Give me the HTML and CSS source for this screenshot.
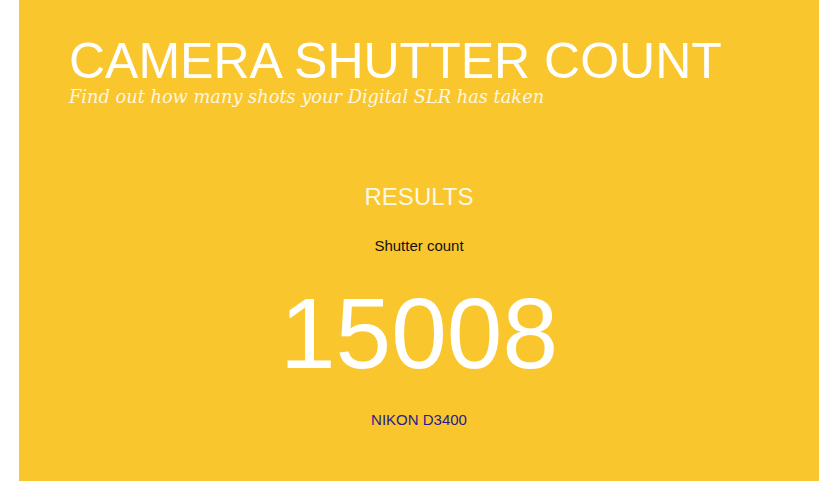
FILE: index.html
```html
<!DOCTYPE html>
<html lang="en">
<head>
<meta charset="utf-8">
<title>Camera Shutter Count</title>
<link rel="stylesheet" href="styles.css">
</head>
<body>
<div class="page">
  <header class="masthead">
    <h1 class="title">CAMERA SHUTTER COUNT</h1>
    <p class="tagline">Find out how many shots your Digital SLR has taken</p>
  </header>
  <section class="results">
    <h2 class="results-heading">RESULTS</h2>
    <p class="results-label">Shutter count</p>
    <p class="results-count">15008</p>
    <a class="results-model" href="#">NIKON D3400</a>
  </section>
</div>
</body>
</html>
```
FILE: styles.css
```css
html, body {
  margin: 0;
  padding: 0;
  background: #ffffff;
  height: 100%;
}

body {
  font-family: "Liberation Sans", Arial, sans-serif;
}

.page {
  width: 800px;
  min-height: 100%;
  margin-left: 19px;
  background: #f9c62e;
  box-sizing: border-box;
  padding: 36px 50px 40px;
}

.title {
  margin: 0;
  font-size: 50px;
  line-height: 50px;
  font-weight: normal;
  color: #ffffff;
}

.tagline {
  margin: 1px 0 0;
  font-family: "DejaVu Serif", Georgia, serif;
  font-style: italic;
  font-size: 17.8px;
  line-height: 20px;
  color: #fdf6e0;
}

.results {
  display: flex;
  flex-direction: column;
  align-items: center;
  margin-top: 76px;
}

.results-heading {
  margin: 0;
  font-size: 24px;
  line-height: 28px;
  font-weight: normal;
  color: #fdf8e6;
}

.results-label {
  margin: 26px 0 0;
  font-size: 15px;
  line-height: 18px;
  color: #111111;
}

.results-count {
  margin: 28px 0 0;
  font-size: 100px;
  line-height: 100px;
  color: #ffffff;
}

.results-model {
  margin-top: 28px;
  font-size: 15px;
  line-height: 18px;
  color: #2a1a8e;
  text-decoration: none;
}
```
